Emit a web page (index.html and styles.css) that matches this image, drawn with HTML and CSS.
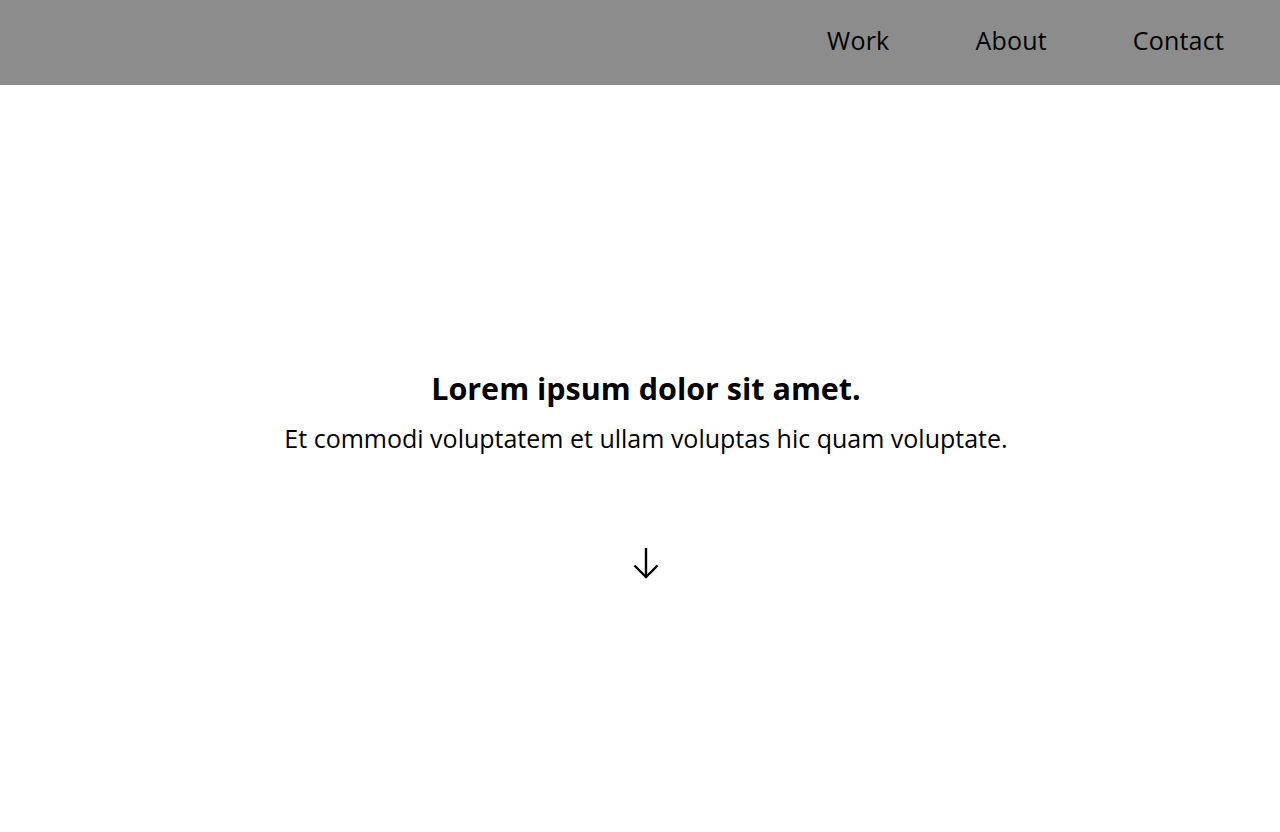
FILE: index.html
```html
<!DOCTYPE html>
<html lang="en">
<head>
<meta charset="utf-8">
<title>Portfolio</title>
<link rel="stylesheet" href="styles.css">
</head>
<body>
<header class="topbar">
  <nav class="nav">
    <a class="nav-link" href="#">Work</a>
    <a class="nav-link" href="#">About</a>
    <a class="nav-link" href="#">Contact</a>
  </nav>
</header>
<main class="hero">
  <div class="hero-text">
    <h1 class="hero-title">Lorem ipsum dolor sit amet.</h1>
    <p class="hero-sub">Et commodi voluptatem et ullam voluptas hic quam voluptate.</p>
  </div>
  <a class="scroll-down" href="#" aria-label="Scroll down">
    <svg width="26" height="32" viewBox="0 0 26 32" fill="none" stroke="#000" stroke-width="2.4" stroke-linecap="butt" stroke-linejoin="miter">
      <path d="M13 1 V30"/>
      <path d="M1.5 18.5 L13 30 L24.5 18.5"/>
    </svg>
  </a>
</main>
</body>
</html>
```

FILE: styles.css
```css
* { box-sizing: border-box; }
html, body { margin: 0; padding: 0; }
body {
  font-family: "Open Sans", "Liberation Sans", sans-serif;
  color: #000;
  background: #fff;
  height: 832px;
  overflow: hidden;
}
.topbar {
  height: 85px;
  background: #8c8c8c;
  display: flex;
  justify-content: flex-end;
  align-items: center;
  padding-right: 56px;
}
.nav {
  display: flex;
  gap: 86px;
  padding-bottom: 6px;
}
.nav-link {
  color: #000;
  text-decoration: none;
  font-size: 25px;
  font-weight: 400;
  letter-spacing: 0.2px;
}
.hero {
  display: flex;
  flex-direction: column;
  align-items: center;
  padding-top: 284px;
  padding-left: 12px;
}
.hero-text {
  text-align: center;
}
.hero-title {
  margin: 0;
  font-size: 30.5px;
  font-weight: 700;
  line-height: 38px;
}
.hero-sub {
  margin: 14px 0 0;
  font-size: 25px;
  font-weight: 400;
  line-height: 34px;
}
.scroll-down {
  display: block;
  margin-top: 92px;
  line-height: 0;
}
```
